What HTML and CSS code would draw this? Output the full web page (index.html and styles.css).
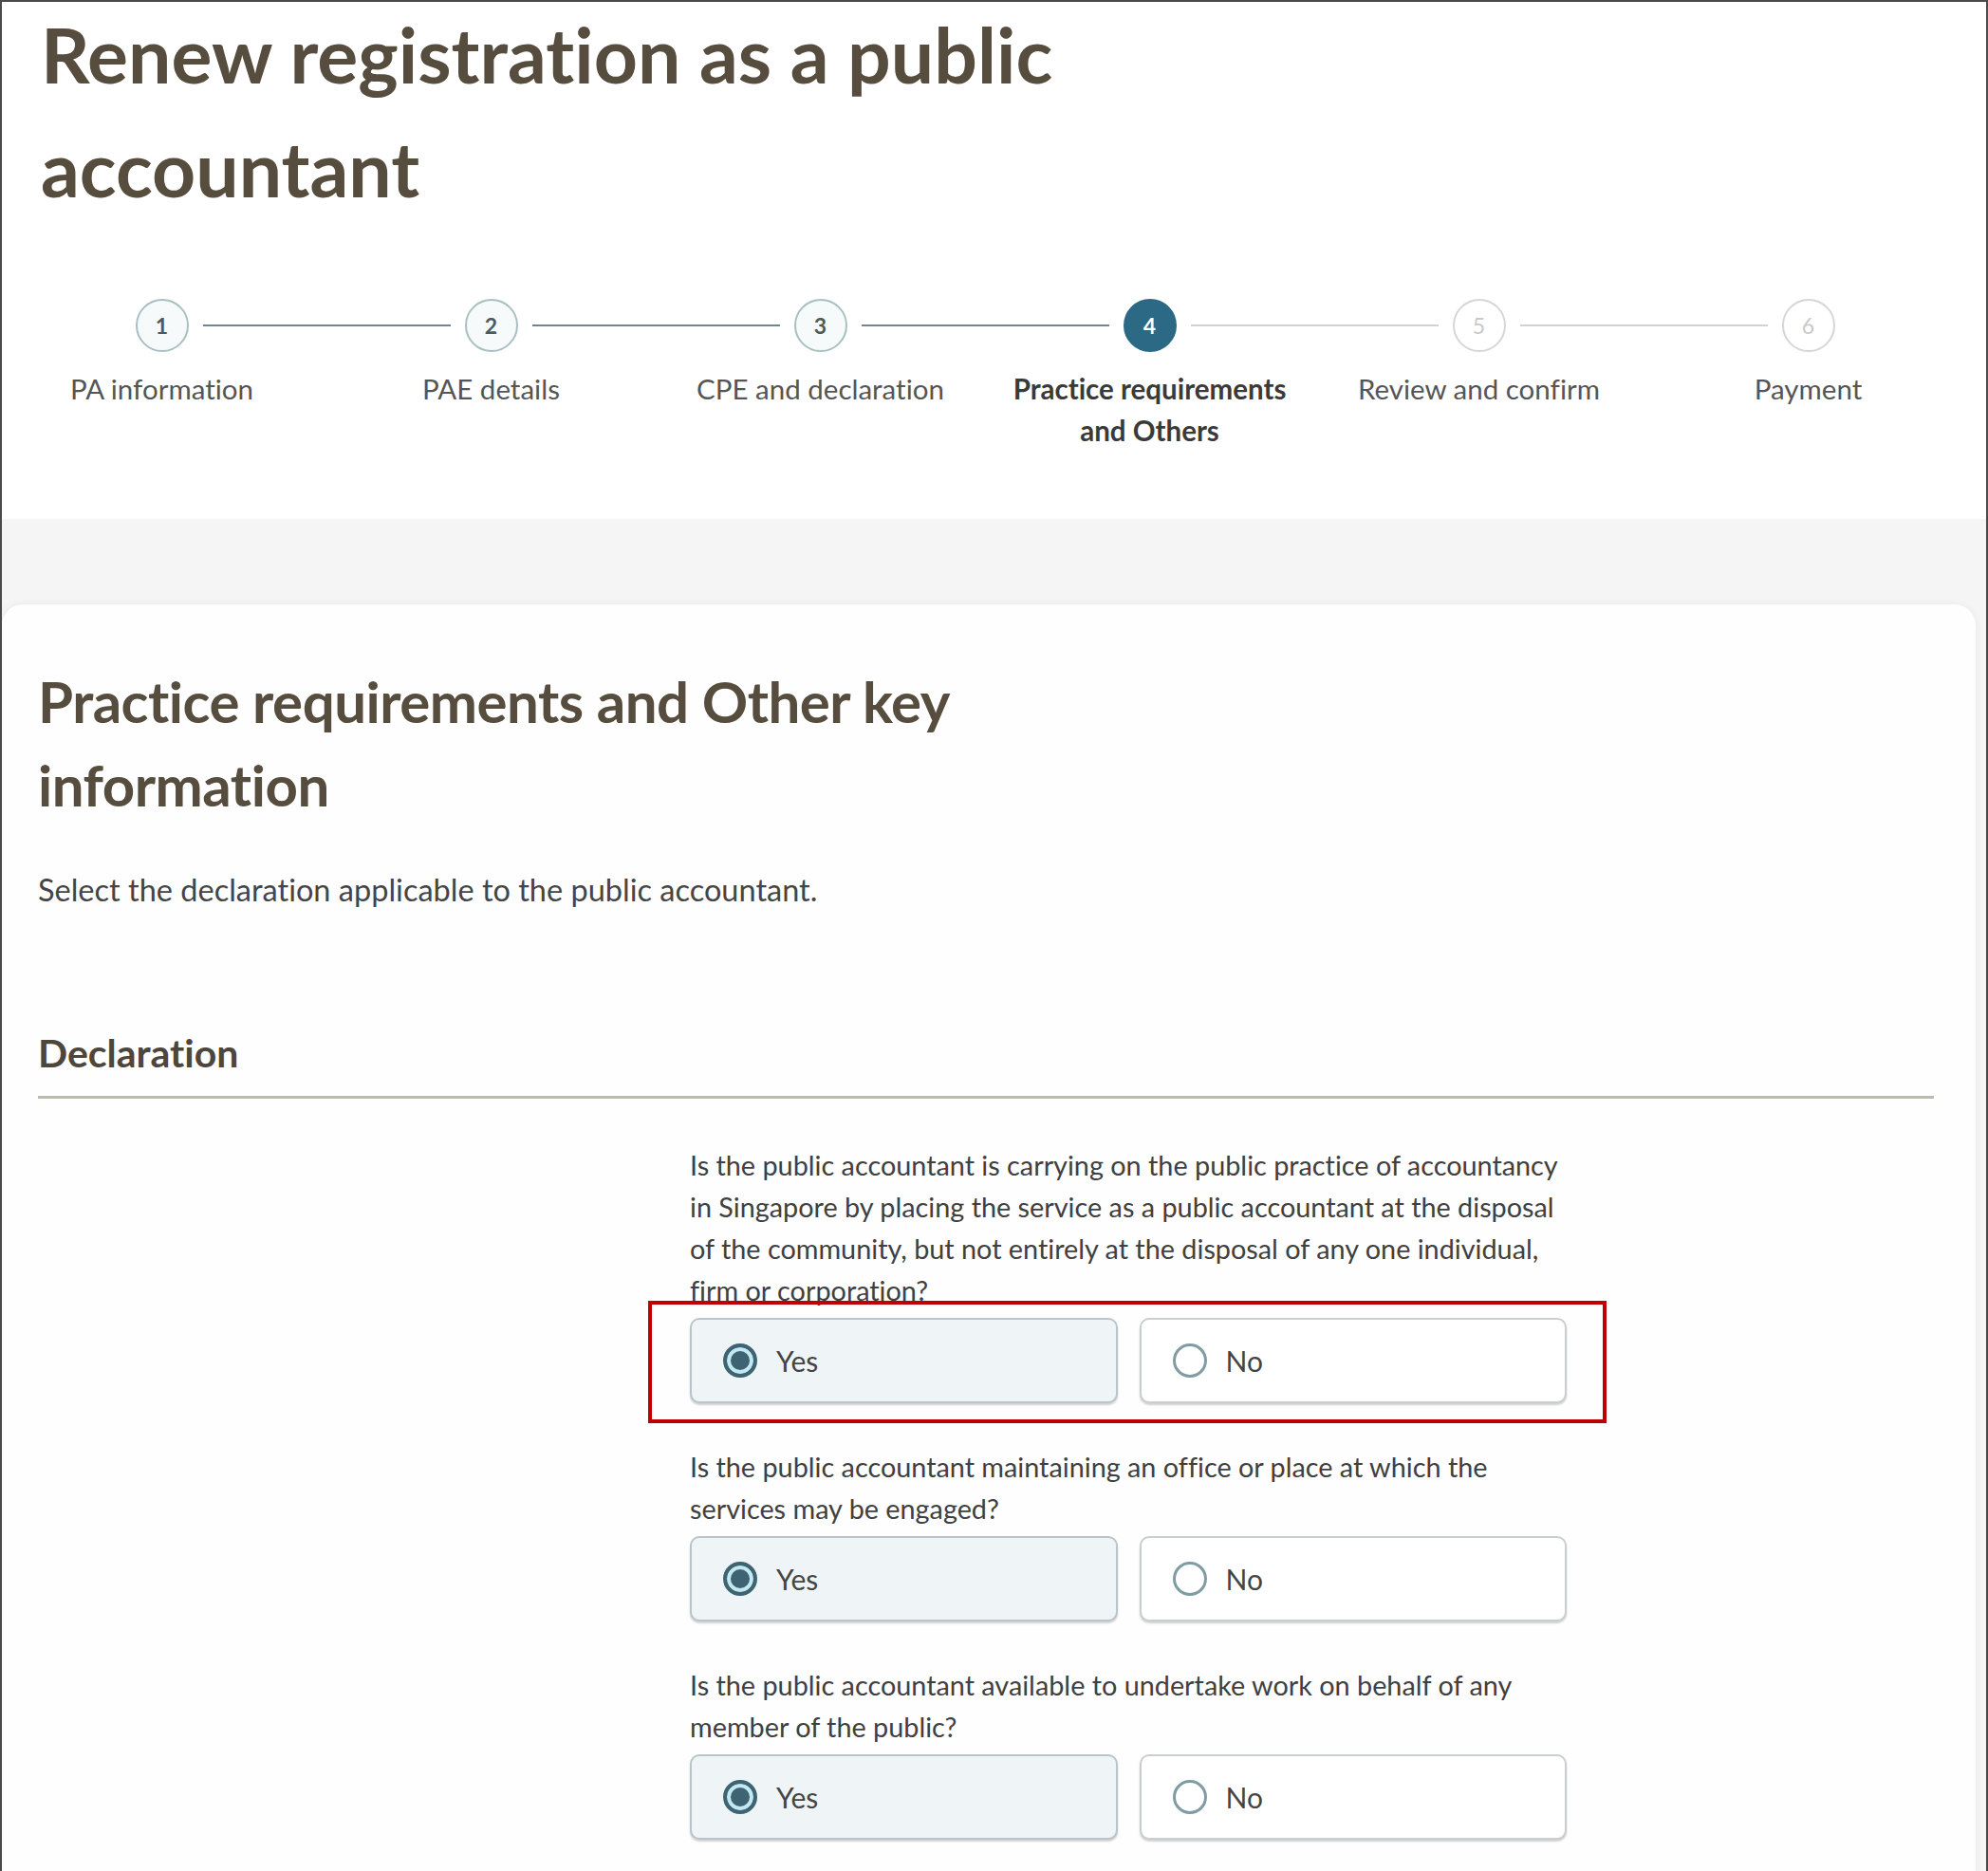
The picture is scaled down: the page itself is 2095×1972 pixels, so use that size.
FILE: index.html
```html
<!DOCTYPE html>
<html lang="en">
<head>
    <meta charset="UTF-8">
    <title>Renew registration as a public accountant</title>
    <link rel="stylesheet" href="styles.css">
</head>
<body>
    <div class="frame">
        <header class="page-head">
            <h1 class="page-title">Renew registration as a public accountant</h1>

            <ol class="stepper">
                <li class="step done"><span class="dot">1</span><span class="step-label">PA information</span></li>
                <li class="step done"><span class="dot">2</span><span class="step-label">PAE details</span></li>
                <li class="step done"><span class="dot">3</span><span class="step-label">CPE and declaration</span></li>
                <li class="step current"><span class="dot">4</span><span class="step-label">Practice requirements and Others</span></li>
                <li class="step todo"><span class="dot">5</span><span class="step-label">Review and confirm</span></li>
                <li class="step todo last"><span class="dot">6</span><span class="step-label">Payment</span></li>
            </ol>
        </header>

        <main class="card">
            <h2 class="card-title">Practice requirements and Other key information</h2>
            <p class="lead">Select the declaration applicable to the public accountant.</p>

            <h3 class="section-title">Declaration</h3>

            <div class="questions">
                <div class="question">
                    <p class="q-text">Is the public accountant is carrying on the public practice of accountancy in Singapore by placing the service as a public accountant at the disposal of the community, but not entirely at the disposal of any one individual, firm or corporation?</p>
                    <div class="choices">
                        <label class="choice checked"><span class="radio"></span>Yes</label>
                        <label class="choice"><span class="radio"></span>No</label>
                        <span class="callout"></span>
                    </div>
                </div>

                <div class="question">
                    <p class="q-text">Is the public accountant maintaining an office or place at which the services may be engaged?</p>
                    <div class="choices">
                        <label class="choice checked"><span class="radio"></span>Yes</label>
                        <label class="choice"><span class="radio"></span>No</label>
                    </div>
                </div>

                <div class="question">
                    <p class="q-text">Is the public accountant available to undertake work on behalf of any member of the public?</p>
                    <div class="choices">
                        <label class="choice checked"><span class="radio"></span>Yes</label>
                        <label class="choice"><span class="radio"></span>No</label>
                    </div>
                </div>
            </div>
        </main>
    </div>
</body>
</html>
```

FILE: styles.css
```css
body {
    margin: 0;
    font-family: Lato, "Open Sans", Arial, sans-serif;
    font-variant-ligatures: none;
    color: #444;
}
.frame {
    min-height: 1970px;
    border: 2px solid #4a4a4a;
    border-bottom: none;
    background-color: #f5f5f5;
    overflow: hidden;
}

/* header + stepper */
.page-head {
    background-color: #fff;
    padding: 0 0 71px 0;
}
.page-title {
    margin: -5px 0 0 41px;
    width: 1200px;
    font-size: 80.5px;
    line-height: 120px;
    font-weight: 700;
    color: #574d3f;
}
.stepper {
    list-style: none;
    margin: 78px 0 0 -5px;
    padding: 0;
    display: grid;
    grid-template-columns: repeat(6, 347px);
}
.step {
    position: relative;
    display: flex;
    flex-direction: column;
    align-items: center;
}
.step::after {
    content: "";
    position: absolute;
    top: 27px;
    left: calc(50% + 43px);
    width: 261px;
    height: 2px;
    background-color: #6b8890;
}
.step.current::after,
.step.todo::after {
    background-color: #d2d2d2;
}
.step.last::after {
    display: none;
}
.dot {
    width: 52px;
    height: 52px;
    border: 2px solid #a9c0c3;
    border-radius: 50%;
    background-color: #f6fafa;
    display: flex;
    align-items: center;
    justify-content: center;
    font-size: 23px;
    font-weight: 700;
    color: #4d5b5c;
}
.step.current .dot {
    background-color: #2b6985;
    border-color: #2b6985;
    color: #fff;
}
.step.todo .dot {
    border-color: #d6d6d6;
    background-color: #fff;
    color: #c9c9c9;
    font-weight: 400;
}
.step-label {
    margin-top: 17px;
    max-width: 320px;
    text-align: center;
    font-size: 29.5px;
    line-height: 44px;
    color: #555;
}
.step.current .step-label {
    font-weight: 700;
    color: #3a3a3a;
}

/* form card */
.card {
    margin: 90px 11px 0 0;
    padding: 58px 44px 60px 38px;
    min-height: 1300px;
    background-color: #fefefe;
    border-radius: 22px 22px 0 0;
    box-shadow: 0 0 8px rgba(0, 0, 0, 0.06);
}
.card-title {
    margin: 0;
    width: 1000px;
    font-size: 60px;
    line-height: 88px;
    font-weight: 700;
    letter-spacing: -0.5px;
    color: #574d3f;
}
.lead {
    margin: 45px 0 0 0;
    font-size: 32.5px;
    line-height: 44px;
    color: #454545;
}
.section-title {
    margin: 125px 0 0 0;
    padding-bottom: 20px;
    border-bottom: 3px solid #b9bcae;
    font-size: 41px;
    line-height: 50px;
    font-weight: 700;
    color: #4d463c;
}
.questions {
    margin: 48px 0 0 687px;
    width: 924px;
}
.question + .question {
    margin-top: 45px;
}
.q-text {
    margin: 0;
    font-size: 28.8px;
    line-height: 44px;
    color: #404040;
}
.choices {
    position: relative;
    margin-top: 7px;
    display: grid;
    grid-template-columns: 1fr 1fr;
    gap: 23px;
}
.choice {
    height: 90px;
    box-sizing: border-box;
    padding-left: 33px;
    display: flex;
    align-items: center;
    gap: 20px;
    border: 2px solid #c9cecf;
    border-radius: 10px;
    background-color: #fff;
    box-shadow: 0 2px 2px rgba(0, 0, 0, 0.18);
    font-size: 30px;
    color: #444;
}
.choice.checked {
    background-color: #eff4f7;
    border-color: #b9c5ca;
}
.radio {
    width: 36px;
    height: 36px;
    box-sizing: border-box;
    border: 3px solid #7f9ca2;
    border-radius: 50%;
    background-color: #fff;
}
.choice.checked .radio {
    border: 4px solid #3e6473;
    background-color: #3e6473;
    box-shadow: inset 0 0 0 4px #c3e8f1;
}
.callout {
    position: absolute;
    top: -18px;
    right: -42px;
    bottom: -21px;
    left: -44px;
    border: 4px solid #c00000;
    pointer-events: none;
}
```
